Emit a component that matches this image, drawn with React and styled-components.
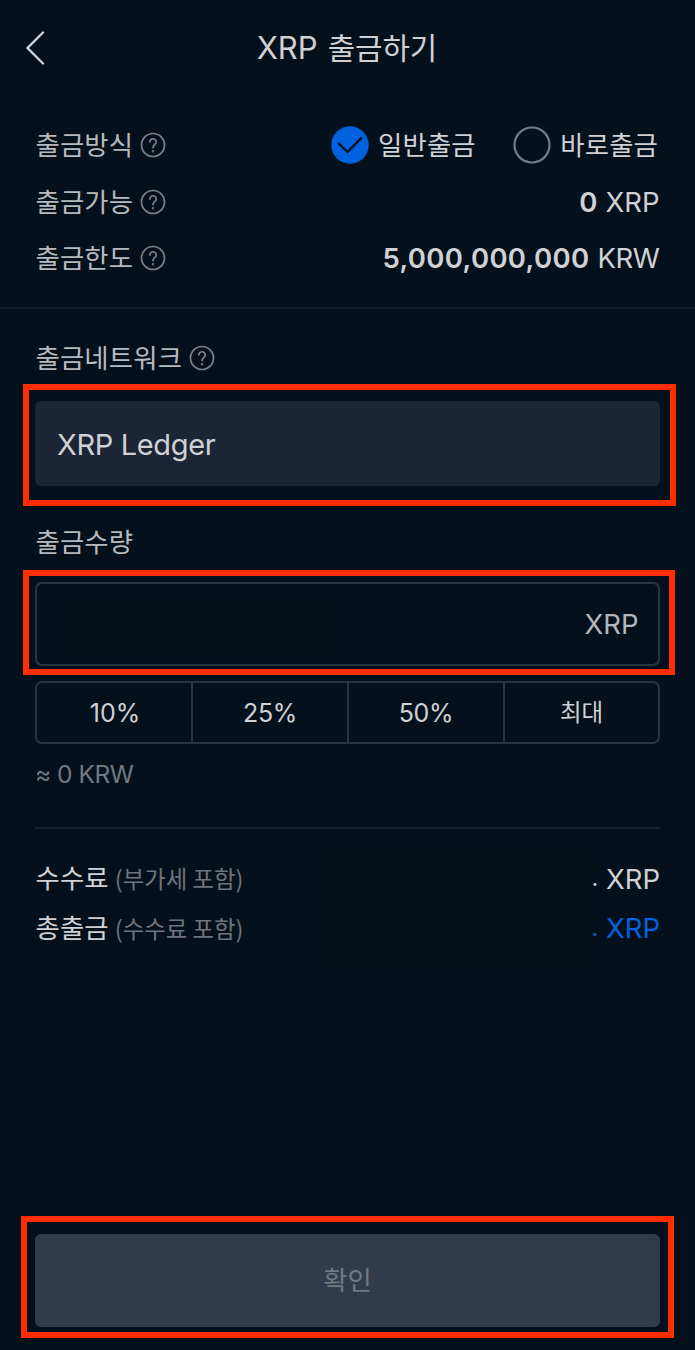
import React from "react";
import styled, { createGlobalStyle } from "styled-components";

const Global = createGlobalStyle`
  * { box-sizing: border-box; }
  body { margin: 0; background: #04111d; }
`;

const Screen = styled.main`
  display: flex;
  flex-direction: column;
  width: 695px;
  height: 1350px;
  overflow: hidden;
  background: #04111d;
  color: #cfd1d5;
  font-family: Inter, "Noto Sans CJK KR", sans-serif;
`;

const Latin = styled.span`
  font-family: Inter, sans-serif;
  font-size: ${(p) => p.$size || 27.5}px;
  font-weight: ${(p) => p.$weight || 400};
  letter-spacing: ${(p) => p.$track || 0}px;
  white-space: pre;
`;

const Hangul = styled.span`
  padding-bottom: ${(p) => p.$lift || 0}px;
  font-family: "Noto Sans CJK KR", sans-serif;
  font-size: ${(p) => p.$size || 26.4}px;
  font-weight: ${(p) => p.$weight || 400};
  letter-spacing: ${(p) => p.$track || 0}px;
  white-space: pre;
`;

const Header = styled.header`
  display: grid;
  grid-template-columns: 60px 1fr 60px;
  align-items: center;
  height: 97px;
  padding-bottom: 2px;
`;

const BackButton = styled.button`
  display: flex;
  padding: 0 0 0 24px;
  border: 0;
  background: none;
  color: #cfd1d5;
`;

const Title = styled.h1`
  display: flex;
  justify-content: center;
  align-items: baseline;
  gap: 10px;
  margin: 0;
  padding: 0 1px 1px 0;
  line-height: 40px;
  font-weight: 400;
`;

const Summary = styled.section`
  height: 212px;
  padding: 20px 35.5px 0 35.5px;
  border-bottom: 2px solid #131f2c;
`;

const Row = styled.div`
  display: flex;
  align-items: center;
  justify-content: space-between;
  height: ${(p) => p.$height}px;
`;

const Label = styled.div`
  display: flex;
  align-items: center;
  gap: 7px;
  height: 34px;
  line-height: 34px;
  color: #b6babf;
`;

const Amount = styled.div`
  display: flex;
  align-items: baseline;
  gap: 8px;
  padding-bottom: ${(p) => p.$lift || 0}px;
  line-height: 34px;
  color: ${(p) => (p.$accent ? "#0062df" : "#cfd1d5")};
`;

const Point = styled.span`
  align-self: center;
  height: 25px;
  font-family: Inter, sans-serif;
  font-size: 22px;
  line-height: 24px;
`;

const Choices = styled.div`
  display: flex;
  gap: 37.5px;
  padding-right: 1.5px;
`;

const Choice = styled.div`
  display: flex;
  align-items: center;
  gap: 9px;
  line-height: 34px;
`;

const Form = styled.section`
  display: flex;
  flex-direction: column;
  flex: 1;
  padding: 32px 19px 12px 21px;
`;

const FieldLabel = styled(Label)`
  margin-top: ${(p) => p.$top || 0}px;
  margin-left: 14.5px;
`;

const Highlight = styled.div`
  width: ${(p) => p.$width}px;
  height: ${(p) => p.$height}px;
  margin: ${(p) => p.$margin};
  padding: ${(p) => p.$padding};
  border: 6px solid #ff2d00;
`;

const NetworkField = styled.div`
  display: flex;
  align-items: center;
  width: 625px;
  height: 85px;
  padding: 1px 0 0 22px;
  border-radius: 6px;
  background: #1c2535;
`;

const AmountField = styled.div`
  display: flex;
  align-items: center;
  justify-content: space-between;
  width: 625px;
  height: 84px;
  padding: 0 19.5px 0 17px;
  border: 2px solid #2a3441;
  border-radius: 7px;
  color: #b3b6bb;
`;

const HiddenValue = styled.div`
  width: 282px;
  height: 59px;
  margin-top: 14px;
  background: #07111a;
`;

const Presets = styled.div`
  display: grid;
  grid-template-columns: 154px 156px 156px 155px;
  width: 625px;
  height: 63px;
  margin: 6px 0 0 14px;
  border: 2px solid #2a3441;
  border-radius: 7px;
`;

const Preset = styled.button`
  display: flex;
  align-items: center;
  justify-content: center;
  padding: 0 0 0 ${(p) => (p.$first ? 2 : 0)}px;
  border: 0;
  border-left: ${(p) => (p.$first ? "0" : "2px solid #2a3441")};
  background: none;
  color: #cfd1d5;
`;

const Estimate = styled.div`
  margin: 13px 0 0 14px;
  height: 34px;
  line-height: 34px;
  color: #73787f;
`;

const Rule = styled.hr`
  width: 625px;
  height: 2px;
  margin: 36px 0 0 14px;
  border: 0;
  background: #15212d;
`;

const Totals = styled.div`
  height: 140px;
  padding: 26px 16px 0 14.5px;
  background: linear-gradient(#07111a, #07111a) 291px 21px / 283px 117px no-repeat;
`;

const TotalName = styled.div`
  display: flex;
  align-items: baseline;
  gap: 6px;
  line-height: 34px;
`;

const Note = styled.span`
  color: #6f747c;
`;

const ConfirmButton = styled.button`
  display: flex;
  align-items: center;
  justify-content: center;
  width: 625px;
  height: 93px;
  padding: 0;
  border: 0;
  border-radius: 6px;
  background: #323b4b;
  color: #737882;
`;

const HelpIcon = () => (
  <svg width="26" height="26" viewBox="0 0 26 26" fill="none" stroke="#7d8289" strokeWidth="1.7" strokeLinecap="round">
    <circle cx="13" cy="13" r="11.5" />
    <path d="M9.8 9.9a3.2 3.1 0 1 1 5.2 2.4c-1.1 1-2 1.6-2 3.3" />
    <circle cx="13" cy="19.2" r="0.4" />
  </svg>
);

const Radio = ({ checked }) => (
  <svg width="38" height="38" viewBox="0 0 38 38" fill="none">
    {checked ? (
      <>
        <circle cx="19" cy="19" r="18.7" fill="#0062df" />
        <path d="M7.8 17.6l8.8 8.4L30.2 12.2" stroke="#04111d" strokeWidth="2.4" strokeLinecap="round" strokeLinejoin="round" />
      </>
    ) : (
      <circle cx="19" cy="19" r="17.5" stroke="#757a84" strokeWidth="2.2" />
    )}
  </svg>
);

const Caption = ({ children }) => <Hangul $lift={2} $track={0.15}>{children}</Hangul>;

export default function App() {
  return (
    <Screen>
      <Global />
      <Header>
        <BackButton aria-label="뒤로">
          <svg width="24" height="36" viewBox="0 0 24 36" fill="none" stroke="currentColor" strokeWidth="2.4" strokeLinecap="round">
            <path d="M19 2.5L3.5 18L19 33.5" />
          </svg>
        </BackButton>
        <Title>
          <Latin $size={31}>XRP</Latin>
          <Hangul $size={29.8}>출금하기</Hangul>
        </Title>
      </Header>

      <Summary>
        <Row $height={56.5}>
          <Label><Caption>출금방식</Caption><HelpIcon /></Label>
          <Choices>
            <Choice><Radio checked /><Caption>일반출금</Caption></Choice>
            <Choice><Radio /><Caption>바로출금</Caption></Choice>
          </Choices>
        </Row>
        <Row $height={56.5}>
          <Label><Caption>출금가능</Caption><HelpIcon /></Label>
          <Amount><Latin $weight={600}>0</Latin><Latin>XRP</Latin></Amount>
        </Row>
        <Row $height={56.5}>
          <Label><Caption>출금한도</Caption><HelpIcon /></Label>
          <Amount><Latin $weight={600} $track={0.35}>5,000,000,000</Latin><Latin $track={-0.4}>KRW</Latin></Amount>
        </Row>
      </Summary>

      <Form>
        <FieldLabel><Caption>출금네트워크</Caption><HelpIcon /></FieldLabel>
        <Highlight $width={653} $height={122} $margin="9px 0 0 2px" $padding="11px 0 0 6px">
          <NetworkField><Latin $size={29} $track={-0.35}>XRP Ledger</Latin></NetworkField>
        </Highlight>
        <FieldLabel $top={19}><Caption>출금수량</Caption></FieldLabel>
        <Highlight $width={652} $height={105} $margin="11px 0 0 2px" $padding="6px 0 0 6px">
          <AmountField><HiddenValue /><Latin>XRP</Latin></AmountField>
        </Highlight>
        <Presets>
          <Preset $first><Latin $size={25}>10%</Latin></Preset>
          <Preset><Latin $size={25} $track={-0.3}>25%</Latin></Preset>
          <Preset><Latin $size={25} $track={-0.3}>50%</Latin></Preset>
          <Preset><Hangul $size={23.5} $lift={3}>최대</Hangul></Preset>
        </Presets>
        <Estimate><Latin $size={24.5} $track={-0.5}>≈ 0 KRW</Latin></Estimate>
        <Rule />
        <Totals>
          <Row $height={49.5}>
            <TotalName><Hangul $track={0.15}>수수료</Hangul><Note><Hangul $size={23.4}>(부가세 포함)</Hangul></Note></TotalName>
            <Amount $lift={2}><Point>.</Point><Latin>XRP</Latin></Amount>
          </Row>
          <Row $height={49.5}>
            <TotalName><Hangul $track={0.15}>총출금</Hangul><Note><Hangul $size={23.4}>(수수료 포함)</Hangul></Note></TotalName>
            <Amount $accent $lift={2}><Point>.</Point><Latin>XRP</Latin></Amount>
          </Row>
        </Totals>
        <Highlight $width={653} $height={122} $margin="auto 0 0 0" $padding="12px 0 0 8px">
          <ConfirmButton><Hangul $lift={4}>확인</Hangul></ConfirmButton>
        </Highlight>
      </Form>
    </Screen>
  );
}
